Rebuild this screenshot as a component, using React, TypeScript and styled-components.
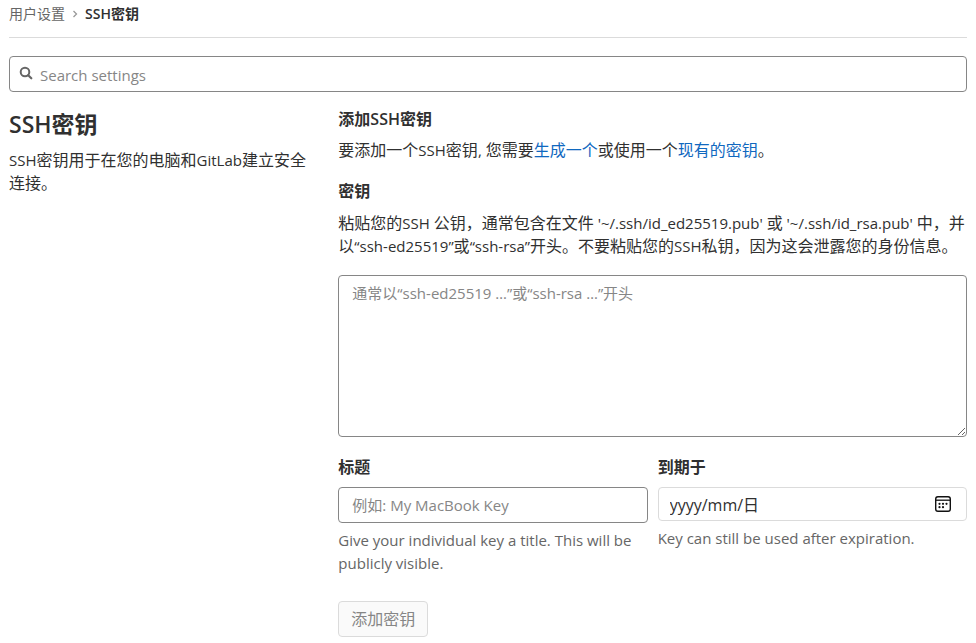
import React from "react";
import styled, { createGlobalStyle } from "styled-components";

const GlobalStyle = createGlobalStyle`
  *, *::before, *::after { box-sizing: border-box; }
  body {
    margin: 0;
    background: #fff;
    color: #303030;
    font-family: "Open Sans", "Noto Sans CJK SC", sans-serif;
    font-size: 16px;
    line-height: 23px;
  }
  button, input, textarea { font: inherit; }
`;

const Page = styled.main`
  padding: 0 9px;
`;

const Breadcrumbs = styled.nav`
  display: flex;
  align-items: center;
  height: 38px;
  padding-bottom: 10px;
  border-bottom: 1px solid #dbdbdb;
  font-size: 14px;
  line-height: 20px;
`;

const CrumbLink = styled.a<{ $current?: boolean }>`
  color: ${(p) => (p.$current ? "#303030" : "#666")};
  font-weight: ${(p) => (p.$current ? 600 : 400)};
  text-decoration: none;
`;

const Chevron = styled.svg`
  width: 6px;
  height: 8px;
  margin: 0 7px;
  color: #999;
`;

const SearchBox = styled.label`
  display: flex;
  align-items: center;
  gap: 7px;
  height: 36px;
  margin-top: 18px;
  padding: 0 9px;
  border: 1px solid #868686;
  border-radius: 4px;
`;

const SearchIcon = styled.svg`
  flex: none;
  width: 14px;
  height: 14px;
  margin-bottom: 3px;
  color: #666;
`;

const SearchInput = styled.input`
  flex: 1;
  min-width: 0;
  padding: 2px 0 0;
  border: 0;
  outline: 0;
  background: transparent;
  font-size: 15px;
  &::placeholder { color: #868686; opacity: 1; }
`;

const Columns = styled.div`
  display: flex;
  margin: 16px -15px 0;
`;

const Intro = styled.section`
  flex: 0 0 33.3333%;
  padding: 0 15px;
`;

const Content = styled.form`
  flex: 1;
  min-width: 0;
  padding: 0 15px;
`;

const PageTitle = styled.h1`
  margin: 0 0 9px;
  font-size: 23px;
  line-height: 32px;
  font-weight: 600;
`;

const SectionTitle = styled.h2`
  margin: 0 0 8px;
  font-size: 16px;
  line-height: 23px;
  font-weight: 600;
`;

const Text = styled.p<{ $after?: number }>`
  margin: 0 0 ${(p) => p.$after ?? 0}px;
`;

const Latin = styled.span`
  font-size: 15px;
`;

const Link = styled.a`
  color: #1068bf;
  text-decoration: none;
`;

const Label = styled.label`
  display: block;
  margin-bottom: 9px;
  font-weight: 600;
`;

const FieldLabel = styled(Label)`
  margin-bottom: 8px;
`;

const KeyArea = styled.textarea`
  display: block;
  width: 100%;
  height: 162px;
  padding: 6px 13px;
  border: 1px solid #868686;
  border-radius: 4px;
  resize: vertical;
  font-size: 15px;
  &::placeholder { color: #868686; opacity: 1; }
`;

const FieldRow = styled.div`
  display: grid;
  grid-template-columns: 1fr 1fr;
  gap: 10px;
  margin-top: 19px;
`;

const TitleInput = styled.input`
  display: block;
  width: 100%;
  height: 36px;
  padding: 0 13px;
  border: 1px solid #868686;
  border-radius: 4px;
  font-size: 15px;
  &::placeholder { color: #868686; opacity: 1; }
`;

const DateBox = styled.div`
  display: flex;
  align-items: center;
  height: 34px;
  padding: 0 14px 0 11px;
  border: 1px solid #dbdbdb;
  border-radius: 4px;
`;

const DateInput = styled.input`
  flex: 1;
  min-width: 0;
  padding: 2px 0 0;
  border: 0;
  outline: 0;
  background: transparent;
  font-size: 16px;
  &::placeholder { color: #303030; opacity: 1; }
`;

const PickerButton = styled.button`
  display: flex;
  padding: 0;
  border: 0;
  background: transparent;
  color: #111;
`;

const Help = styled.p`
  margin: 6px 0 0;
  color: #666;
  font-size: 15px;
`;

const SubmitButton = styled.button`
  height: 36px;
  margin-top: 26px;
  padding: 0 12px;
  border: 1px solid #dbdbdb;
  border-radius: 4px;
  background: #fafafa;
  color: #868686;
`;

export default function App() {
  return (
    <>
      <GlobalStyle />
      <Page lang="zh-CN">
        <Breadcrumbs aria-label="Breadcrumbs">
          <CrumbLink href="#profile">用户设置</CrumbLink>
          <Chevron viewBox="0 0 6 8" fill="none" aria-hidden="true">
            <path d="M1.5 1l3 3-3 3" stroke="currentColor" strokeWidth="1.3" />
          </Chevron>
          <CrumbLink href="#keys" $current>SSH密钥</CrumbLink>
        </Breadcrumbs>

        <SearchBox>
          <SearchIcon viewBox="0 0 14 14" fill="none" aria-hidden="true">
            <circle cx="6" cy="6" r="4.3" stroke="currentColor" strokeWidth="2" />
            <path d="M9.2 9.2l3.1 3.1" stroke="currentColor" strokeWidth="2.2" strokeLinecap="round" />
          </SearchIcon>
          <SearchInput type="search" placeholder="Search settings" aria-label="Search settings" />
        </SearchBox>

        <Columns>
          <Intro>
            <PageTitle>SSH密钥</PageTitle>
            <Text>
              <Latin>SSH</Latin>密钥用于在您的电脑和<Latin>GitLab</Latin>建立安全连接。
            </Text>
          </Intro>

          <Content onSubmit={(e) => e.preventDefault()}>
            <SectionTitle>添加SSH密钥</SectionTitle>
            <Text $after={18}>
              要添加一个<Latin>SSH</Latin>密钥<Latin>, </Latin>您需要<Link href="#generate">生成一个</Link>或使用一个<Link href="#existing">现有的密钥</Link>。
            </Text>

            <Label htmlFor="key">密钥</Label>
            <Text $after={17}>
              粘贴您的<Latin>SSH </Latin>公钥，通常包含在文件<Latin> '~/.ssh/id_ed25519.pub' </Latin>或<Latin> '~/.ssh/id_rsa.pub' </Latin>中，并以<Latin>“ssh-ed25519”</Latin>或<Latin>“ssh-rsa”</Latin>开头。不要粘贴您的<Latin>SSH</Latin>私钥，因为这会泄露您的身份信息。
            </Text>
            <KeyArea id="key" placeholder="通常以“ssh-ed25519 …”或“ssh-rsa …”开头" />

            <FieldRow>
              <div>
                <FieldLabel htmlFor="title">标题</FieldLabel>
                <TitleInput id="title" type="text" placeholder="例如: My MacBook Key" />
                <Help>Give your individual key a title. This will be publicly visible.</Help>
              </div>
              <div>
                <FieldLabel htmlFor="expires">到期于</FieldLabel>
                <DateBox>
                  <DateInput id="expires" type="text" placeholder="yyyy/mm/日" />
                  <PickerButton type="button" aria-label="选择日期">
                    <svg width="18" height="18" viewBox="0 0 18 18" fill="none" aria-hidden="true">
                      <rect x="1.7" y="1.7" width="14.6" height="14.6" rx="2.2" stroke="currentColor" strokeWidth="1.4" />
                      <path d="M2 5.2h14" stroke="currentColor" strokeWidth="1.3" />
                      <g fill="currentColor">
                        <circle cx="5.5" cy="8.8" r="1.1" />
                        <circle cx="9" cy="8.8" r="1.1" />
                        <circle cx="12.5" cy="8.8" r="1.1" />
                        <circle cx="5.5" cy="12.2" r="1.1" />
                        <circle cx="9" cy="12.2" r="1.1" />
                      </g>
                    </svg>
                  </PickerButton>
                </DateBox>
                <Help>Key can still be used after expiration.</Help>
              </div>
            </FieldRow>

            <SubmitButton type="submit" disabled>添加密钥</SubmitButton>
          </Content>
        </Columns>
      </Page>
    </>
  );
}
